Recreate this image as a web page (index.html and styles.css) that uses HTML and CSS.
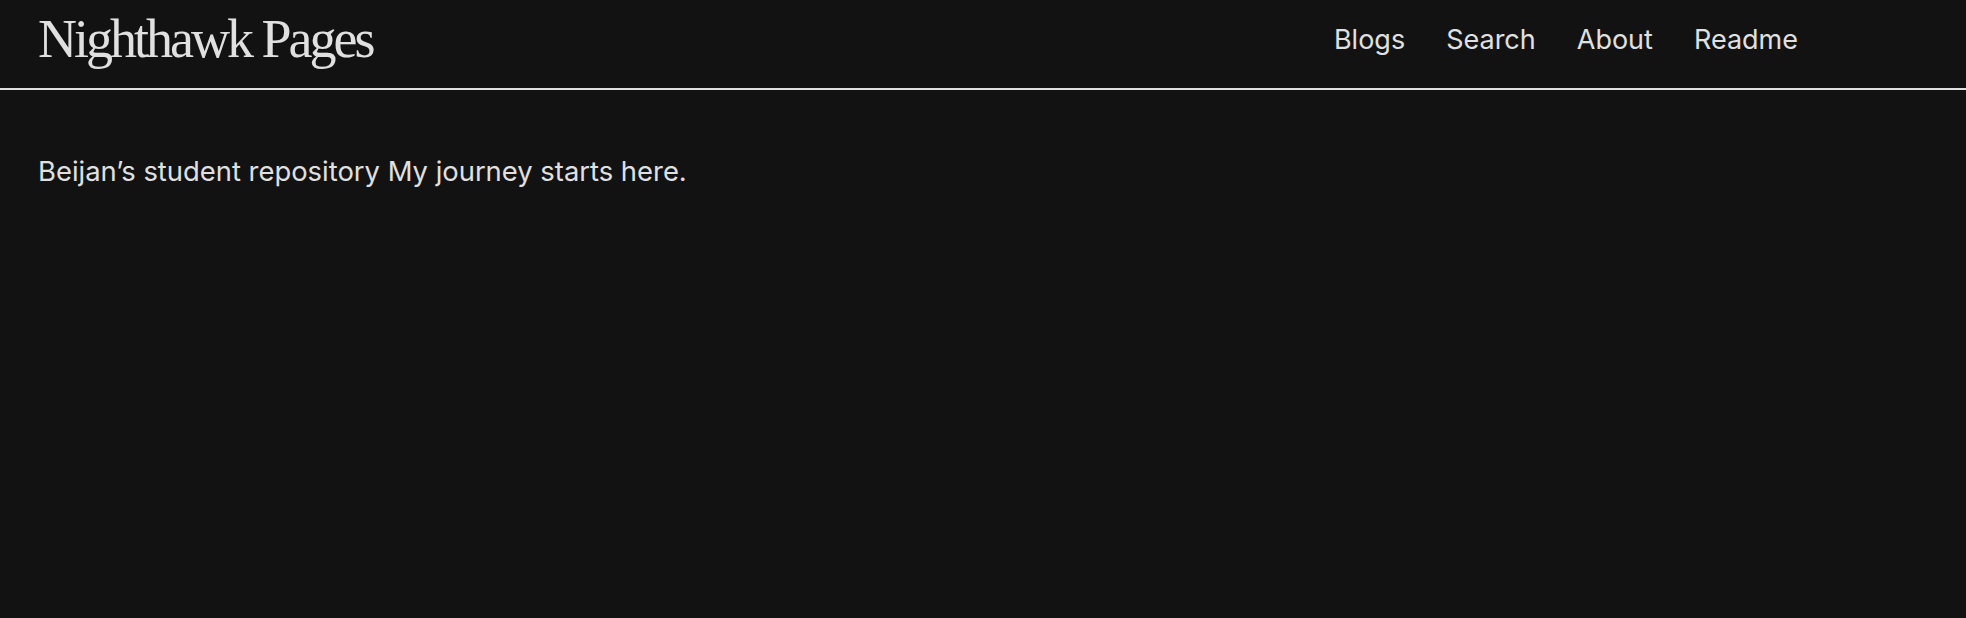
FILE: index.html
```html
<!DOCTYPE html>
<html lang="en">
<head>
<meta charset="utf-8">
<title>Nighthawk Pages</title>
<link rel="stylesheet" href="styles.css">
</head>
<body>
<header class="site-header">
  <a class="site-title" href="#">Nighthawk Pages</a>
  <nav class="site-nav">
    <a class="nav-link" href="#">Blogs</a>
    <a class="nav-link" href="#">Search</a>
    <a class="nav-link" href="#">About</a>
    <a class="nav-link" href="#">Readme</a>
  </nav>
</header>
<main class="page-content">
  <p class="intro">Beijan’s student repository My journey starts here.</p>
</main>
</body>
</html>
```

FILE: styles.css
```css
html, body {
  margin: 0;
  padding: 0;
  background: #121212;
  color: #e0e0e0;
  height: 100%;
}

body {
  font-family: Inter, "Noto Sans", sans-serif;
}

.site-header {
  height: 88px;
  border-bottom: 2px solid #e0e0e0;
  display: flex;
  align-items: flex-start;
  padding: 0 38px;
  box-sizing: content-box;
}

.site-title {
  font-family: "Liberation Serif", "Times New Roman", serif;
  font-size: 54px;
  letter-spacing: -3px;
  line-height: 1;
  color: #e0e0e0;
  text-decoration: none;
  padding-top: 12px;
}

.site-nav {
  margin-left: auto;
  margin-right: 130px;
  display: flex;
  gap: 41px;
  padding-top: 23px;
}

.nav-link {
  font-size: 27px;
  line-height: 34px;
  color: #e0e0e0;
  text-decoration: none;
}

.page-content {
  padding: 0 38px;
}

.intro {
  margin: 0;
  padding-top: 64px;
  font-size: 27.4px;
  line-height: 34px;
}
```
